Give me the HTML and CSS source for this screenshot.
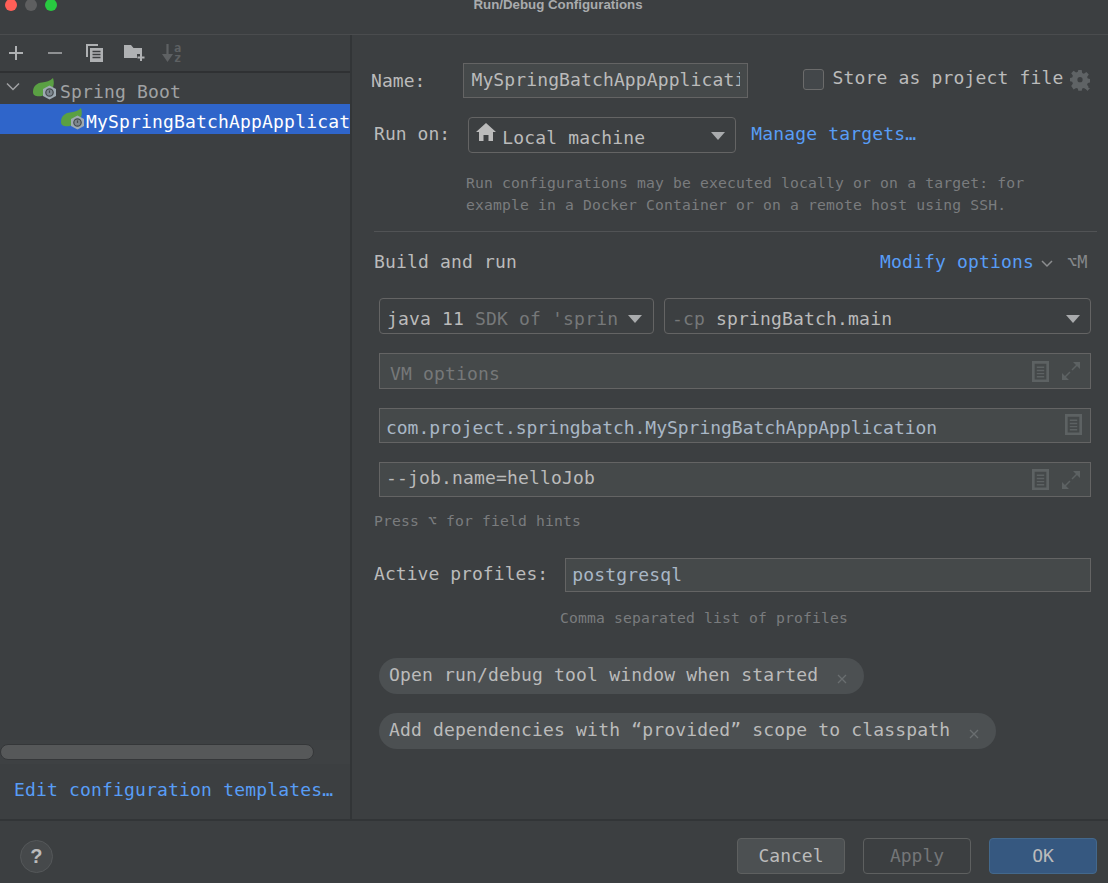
FILE: index.html
```html
<!DOCTYPE html>
<html lang="en">
<head>
<meta charset="utf-8">
<title>Run/Debug Configurations</title>
<link rel="stylesheet" href="styles.css">
</head>
<body>
<svg class="defs" width="0" height="0" aria-hidden="true">
  <symbol id="spring" viewBox="0 0 24 22">
    <path d="M0 14C0 8 4 5 9 4.500C13 4 17 3 20 0C21.500 5 21 9 18 12L9 18C4 19 0 18 0 14Z" fill="#5aa043"/>
    <path d="M16.500 7.500l6.500 3.500v7l-6.500 3.500-6.500-3.500v-7z" fill="#9eaab2"/>
    <circle cx="16.500" cy="14.500" r="3.700" fill="#7d878e" stroke="#454a4d" stroke-width="1.200"/>
    <path d="M16.500 12.400v2.500" stroke="#454a4d" stroke-width="1.200"/>
  </symbol>
  <symbol id="doc" viewBox="0 0 16 20" preserveAspectRatio="none">
    <path d="M0 0h16v20H0zM2.500 2.500v15h11v-15z" fill="#5d6263" fill-rule="evenodd"/>
    <path d="M4.500 6h7M4.500 9h7M4.500 12h7M4.500 15h7" stroke="#5d6263" stroke-width="1.300"/>
  </symbol>
  <symbol id="expand" viewBox="0 0 18 18">
    <path d="M11 0h7v7zM0 18v-7l7 7z" fill="#5d6263"/>
    <path d="M15 3L10 8M3 15l5-5" stroke="#5d6263" stroke-width="1.500"/>
  </symbol>
  <symbol id="close" viewBox="0 0 10 10">
    <path d="M1 1l8 8M9 1l-8 8" stroke="#6a6e70" stroke-width="1.300"/>
  </symbol>
</svg>
<div class="dialog">
  <header class="titlebar">
    <div class="lights"><span class="light red"></span><span class="light gray"></span><span class="light green"></span></div>
    <div class="title">Run/Debug Configurations</div>
  </header>
  <div class="body">
    <aside class="sidebar">
      <div class="toolbar">
        <svg class="tool tool-plus" viewBox="0 0 16 16"><path d="M8 1v14M1 8h14" stroke="#afb1b3" stroke-width="2"/></svg>
        <svg class="tool tool-minus" viewBox="0 0 16 16"><path d="M1 8h14" stroke="#8f9193" stroke-width="2"/></svg>
        <svg class="tool tool-copy" viewBox="0 0 19 20"><path d="M1 1h12v2H3v11H1z" fill="#afb1b3"/><path d="M5 5h13v14H5z" fill="#afb1b3"/><path d="M7.500 8.500h8M7.500 11.500h8M7.500 14.500h8" stroke="#3c3f41" stroke-width="1.300"/></svg>
        <svg class="tool tool-folder" viewBox="0 0 22 18"><path d="M0 1h7l2.500 3H18v6h-5v4H0z" fill="#afb1b3"/><path d="M17 10v7M13.500 13.500h7" stroke="#afb1b3" stroke-width="2"/></svg>
        <svg class="tool tool-sort" viewBox="0 0 11 20"><path d="M5.500 1v12" stroke="#5e6163" stroke-width="2.200"/><path d="M0 11h11l-5.500 8z" fill="#5e6163"/></svg>
        <span class="sort-letters"><span class="sort-a">a</span><span class="sort-z">z</span></span>
      </div>
      <div class="tree">
        <div class="tree-row group">
          <svg class="chevron" viewBox="0 0 14 10"><path d="M1 1.500l6 6 6-6" stroke="#a0a2a4" stroke-width="1.500" fill="none"/></svg>
          <svg class="spring"><use href="#spring"/></svg>
          <span class="tree-text">Spring Boot</span>
        </div>
        <div class="tree-row selected">
          <svg class="spring"><use href="#spring"/></svg>
          <span class="tree-text">MySpringBatchAppApplicat</span>
        </div>
      </div>
      <div class="scroll-track"><div class="scroll-thumb"></div></div>
      <a class="link templates">Edit configuration templates…</a>
    </aside>
    <main class="form">
      <div class="row name-row">
        <label class="label">Name:</label>
        <div class="field name-field"><span class="clip">MySpringBatchAppApplicati</span></div>
        <span class="checkbox"></span>
        <span class="store">Store as project file</span>
        <svg class="gear" viewBox="0 0 20 22"><path d="M8.300 0h3.400l.5 3 1.700.7 2.500-1.700 2.400 2.400-1.700 2.500.7 1.700 2.200.5v3.400l-2.200.5-.7 1.700 1.700 2.500-2.400 2.400-2.500-1.700-1.700.7-.5 2.200H8.300l-.5-2.200-1.700-.7-2.500 1.700L1.200 16l1.700-2.500-.7-1.700L0 11.300V7.900l2.200-.5.700-1.700L1.200 3.200 3.600 .8l2.500 1.700 1.700-.7z" fill="#5f6365"/><circle cx="10" cy="9.700" r="2.600" fill="#3c3f41"/><path d="M15 18h5l-2.500 3z" fill="#5f6365"/></svg>
      </div>
      <div class="row run-row">
        <label class="label run-label">Run on:</label>
        <div class="select local">
          <svg class="home" viewBox="0 0 20 18"><path d="M10 0l10 9h-3v9h-4.500v-6h-5v6H3V9H0z" fill="#bbbbbb"/></svg>
          <span class="local-text">Local machine</span>
          <span class="arrow"></span>
        </div>
        <a class="link manage">Manage targets…</a>
      </div>
      <p class="help run-help">Run configurations may be executed locally or on a target: for<br>example in a Docker Container or on a remote host using SSH.</p>
      <div class="separator"></div>
      <div class="row section-row">
        <span class="label section">Build and run</span>
        <a class="link modify">Modify options</a>
        <svg class="mod-chevron" viewBox="0 0 12 8"><path d="M1 1l5 5 5-5" stroke="#8c8e90" stroke-width="1.500" fill="none"/></svg>
        <span class="shortcut">⌥M</span>
      </div>
      <div class="row select-row">
        <div class="select sdk"><span class="strong">java 11</span><span class="dim">SDK of 'sprin</span><span class="arrow"></span></div>
        <div class="select cp"><span class="dim">-cp</span><span class="strong">springBatch.main</span><span class="arrow"></span></div>
      </div>
      <div class="field wide vm"><span class="dim grow">VM options</span><svg class="ico-doc"><use href="#doc"/></svg><svg class="ico-exp"><use href="#expand"/></svg></div>
      <div class="field wide main-class"><span class="value grow">com.project.springbatch.MySpringBatchAppApplication</span><svg class="ico-doc"><use href="#doc"/></svg></div>
      <div class="field wide args"><span class="grow">--job.name=helloJob</span><svg class="ico-doc"><use href="#doc"/></svg><svg class="ico-exp"><use href="#expand"/></svg></div>
      <p class="help hint">Press ⌥ for field hints</p>
      <div class="row profiles-row">
        <label class="label profiles-label">Active profiles:</label>
        <div class="field profiles"><span class="value">postgresql</span></div>
      </div>
      <p class="help comma">Comma separated list of profiles</p>
      <div class="chip chip-one"><span>Open run/debug tool window when started</span><svg class="close"><use href="#close"/></svg></div>
      <div class="chip chip-two"><span>Add dependencies with “provided” scope to classpath</span><svg class="close"><use href="#close"/></svg></div>
    </main>
  </div>
  <footer class="footer">
    <span class="help-btn">?</span>
    <div class="buttons">
      <span class="btn cancel">Cancel</span>
      <span class="btn apply">Apply</span>
      <span class="btn ok">OK</span>
    </div>
  </footer>
</div>
</body>
</html>
```
FILE: styles.css
```css
* { box-sizing: border-box; }
html, body { margin: 0; padding: 0; height: 100%; overflow: hidden; }
body {
  background: #3c3f41;
  color: #bbbbbb;
  font-family: "DejaVu Sans Mono", "Liberation Mono", monospace;
  font-size: 18px;
  line-height: 22px;
  letter-spacing: .17px;
}
.defs { display: block; height: 0; }
.dialog { width: 1108px; height: 883px; display: flex; flex-direction: column; }

.titlebar { height: 35px; flex: none; border-bottom: 1px solid #4a4c4e; position: relative; }
.lights { display: flex; gap: 8px; padding: 0 0 0 5px; margin-top: -1px; }
.light { width: 12px; height: 12px; border-radius: 50%; }
.red { background: #ff5f57; }
.gray { background: #5e5f60; }
.green { background: #28c940; }
.title {
  position: absolute; left: 0; right: 0; top: -2px;
  text-align: center; font: bold 13.3px/14px "Liberation Sans", sans-serif; color: #a9abad;
  padding-left: 8px; letter-spacing: 0;
}

.body { flex: none; height: 784px; display: flex; }
.sidebar { width: 352px; flex: none; border-right: 2px solid #323537; display: flex; flex-direction: column; }
.toolbar { height: 38px; flex: none; border-bottom: 2px solid #2f3133; display: flex; align-items: center; padding-left: 8px; }
.tool { display: block; flex: none; }
.tool-plus { width: 16px; height: 16px; margin-right: 23px; }
.tool-minus { width: 16px; height: 16px; margin-right: 22px; }
.tool-copy { width: 19px; height: 20px; margin-right: 20px; }
.tool-folder { width: 22px; height: 18px; margin-right: 16px; }
.tool-sort { width: 11px; height: 20px; }
.sort-letters { display: flex; flex-direction: column; font-size: 12px; line-height: 10px; letter-spacing: 0; color: #5e6163; font-weight: bold; margin-left: 1px; }
.sort-a { height: 10px; overflow: visible; }
.sort-z { height: 10px; overflow: visible; }

.tree { flex: 1; padding-top: 1px; }
.tree-row { height: 30px; display: flex; align-items: center; white-space: nowrap; overflow: hidden; }
.tree-text { padding-top: 6px; line-height: 24px; }
.group { color: #a0a2a4; padding-left: 6px; }
.chevron { width: 14px; height: 10px; margin-right: 13px; margin-top: -4px; flex: none; }
.spring { width: 24px; height: 22px; flex: none; }
.group .spring { margin-right: 3px; }
.selected { background: #2f65ca; color: #ffffff; padding-left: 61px; width: 350px; }
.selected .spring { margin-right: 1px; }

.scroll-track { height: 24px; flex: none; display: flex; align-items: center; background: #3e4143; }
.scroll-thumb { width: 314px; height: 16px; border-radius: 8px; background: #565859; border: 1px solid #353739; }
.link { color: #589df6; }
.templates { height: 55px; flex: none; display: flex; align-items: center; padding: 0 0 3px 14px; white-space: nowrap; }

.form { flex: 1; padding: 28px 11px 0 22px; min-width: 0; white-space: nowrap; }
.row { display: flex; align-items: center; }
.name-row { height: 35px; margin-left: -3px; }
.label { flex: none; letter-spacing: .05px; }
.field { background: #45494a; border: 1px solid #646464; height: 35px; display: flex; align-items: center; padding-left: 7px; }
.name-field { width: 285px; margin-left: 38px; flex: none; color: #bbbbbb; padding-left: 7px; letter-spacing: .12px; }
.clip { display: block; width: 269px; overflow: hidden; white-space: nowrap; margin-top: -1px; }
.checkbox { width: 21px; height: 21px; flex: none; border: 1px solid #6b6b6b; border-radius: 3px; background: #43474a; margin-left: 55px; margin-top: -2px; }
.store { margin-left: 8px; margin-top: -6px; flex: none; width: 238px; }
.gear { width: 20px; height: 22px; flex: none; }

.run-row { height: 36px; margin-top: 19px; }
.run-label { margin-top: -2px; }
.select { border: 1px solid #646464; border-radius: 4px; height: 36px; display: flex; align-items: center; flex: none; }
.local { width: 268px; margin-left: 18px; padding-left: 7px; }
.home { width: 20px; height: 18px; margin-right: 6px; margin-top: -7px; flex: none; }
.local-text { margin-top: 6px; flex: 1; }
.arrow { width: 0; height: 0; border-left: 7px solid transparent; border-right: 7px solid transparent; border-top: 8px solid #a9abad; flex: none; }
.local .arrow { margin: 2px 10px 0 0; }
.manage { margin: -2px 0 0 15px; }

.help { margin: 0; font-size: 14.7px; line-height: 22px; letter-spacing: .16px; color: #7a7c7e; }
.run-help { margin: 19px 0 0 92px; }
.separator { height: 1px; background: #515355; margin: 15px 0 0 0; width: 723px; }
.section-row { height: 22px; margin-top: 19px; }
.section { width: 506px; letter-spacing: .17px; }
.modify { flex: none; width: 161px; }
.mod-chevron { width: 12px; height: 8px; flex: none; margin: 4px 0 0 0; }
.shortcut { font-size: 17px; letter-spacing: 0; color: #85878a; margin-left: 14px; flex: none; }

.select-row { margin: 25px 0 0 5px; gap: 10px; }
.select-row .select { padding-top: 5px; }
.sdk { width: 275px; padding-left: 7px; }
.sdk .dim { margin-left: 11px; flex: 1; overflow: hidden; }
.sdk .arrow { margin-right: 11px; margin-left: 4px; }
.cp { width: 427px; padding-left: 7px; }
.cp .strong { margin-left: 11px; flex: 1; }
.cp .arrow { margin-right: 10px; }
.strong { color: #bbbbbb; }
.dim { color: #767879; }

.wide { width: 712px; margin-left: 5px; }
.vm { margin-top: 19px; height: 36px; padding-left: 10px; }
.vm .grow { padding-top: 5px; }
.main-class { margin-top: 19px; height: 35px; padding-left: 6px; letter-spacing: -.03px; }
.main-class .grow { padding-top: 4px; }
.args { margin-top: 19px; height: 35px; padding-left: 6px; }
.args .grow { padding-bottom: 3px; }
.grow { flex: 1; }
.value { color: #a9b7c6; }
.ico-doc { width: 17px; height: 21px; flex: none; margin-right: 13px; }
.main-class .ico-doc { margin-right: 8px; margin-top: -3px; }
.ico-exp { width: 18px; height: 18px; flex: none; margin-right: 10px; }

.hint { margin: 13px 0 0 0; }
.profiles-row { margin-top: 26px; height: 34px; }
.profiles-label { margin-top: -2px; }
.profiles { width: 526px; height: 34px; margin-left: 17px; padding-left: 6px; }
.comma { margin: 15px 0 0 186px; }
.chip { display: flex; align-items: center; height: 36px; border-radius: 18px; background: #4c5052; margin-left: 5px; padding-left: 10px; color: #bbbbbb; }
.chip-one { width: 485px; margin-top: 29px; }
.chip-two { width: 617px; margin-top: 19px; }
.chip span { flex: 1; margin-top: -3px; }
.close { width: 10px; height: 10px; flex: none; margin: 5px 17px 0 0; }

.footer { flex: none; height: 64px; border-top: 2px solid #323537; display: flex; align-items: flex-start; padding: 17px 11px 0 20px; justify-content: space-between; }
.help-btn { width: 33px; height: 33px; margin-top: 2px; border-radius: 50%; border: 1px solid #55585a; background: #46494b; color: #bbbbbb; font: bold 20px/31px "Liberation Sans", sans-serif; text-align: center; }
.buttons { display: flex; gap: 18px; letter-spacing: 0; }
.btn { width: 108px; height: 36px; border-radius: 4px; text-align: center; line-height: 33px; border: 1px solid #5e6060; }
.cancel { background: #4c5052; }
.apply { color: #747678; }
.ok { background: #365880; border-color: #43688c; color: #bbbbbb; }
```
